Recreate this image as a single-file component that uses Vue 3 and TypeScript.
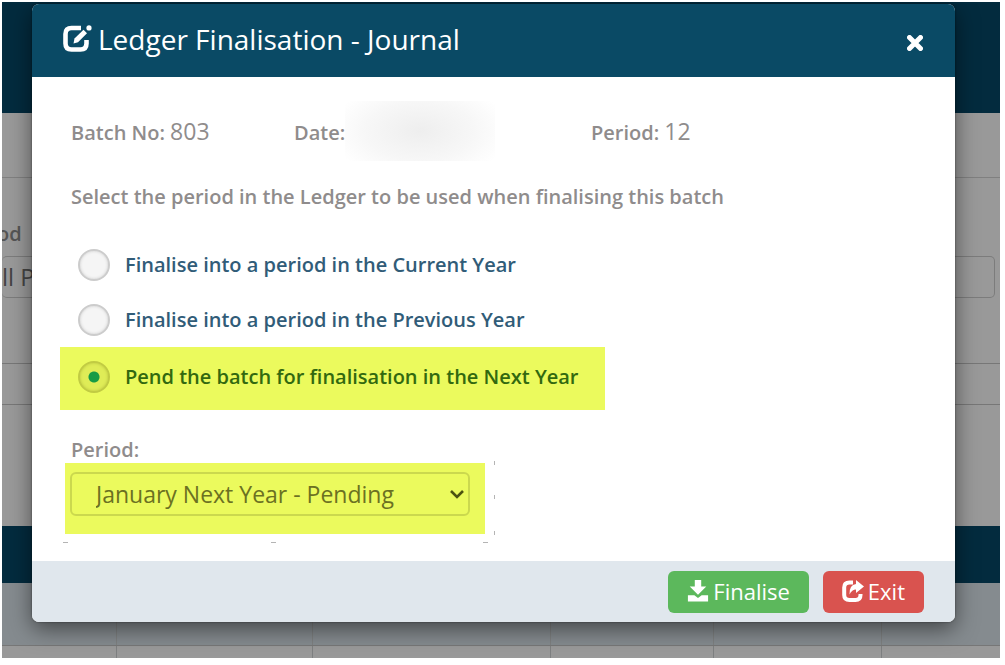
<script setup lang="ts">
import { ref } from 'vue'

interface Option {
  value: string
  label: string
}

const options: Option[] = [
  { value: 'current', label: 'Finalise into a period in the Current Year' },
  { value: 'previous', label: 'Finalise into a period in the Previous Year' },
  { value: 'next', label: 'Pend the batch for finalisation in the Next Year' },
]
const target = ref('next')
const period = ref('January Next Year - Pending')
</script>

<template>
  <div class="screen">
    <div class="page" aria-hidden="true">
      <div class="page-bar"></div>
      <div class="page-strip"></div>
      <div class="page-filters">
        <div class="page-label">od</div>
        <div class="page-field">ll P</div>
      </div>
      <div class="page-line"></div>
      <div class="page-blank"></div>
      <div class="page-title"></div>
      <div class="page-grid head"><i></i><i></i><i></i><i></i><i></i><i></i></div>
      <div class="page-grid"><i></i><i></i><i></i><i></i><i></i><i></i></div>
    </div>

    <div class="modal" role="dialog" aria-labelledby="title">
      <header class="header">
        <svg class="title-icon" viewBox="0 0 30 28" aria-hidden="true">
          <path d="M19 3H9.500Q3.500 3 3.500 9V18.500Q3.500 24.500 9.500 24.500H18.500Q24.500 24.500 24.500 18.500V15" fill="none" stroke="#fff" stroke-width="4.600" />
          <path d="M11.500 18.500L12.500 13.500L21.500 4.800L25 8.200L16 17.300Z" fill="#fff" />
          <circle cx="27" cy="2.900" r="2.600" fill="#fff" />
        </svg>
        <h1 id="title">Ledger Finalisation - Journal</h1>
        <button class="close" type="button" aria-label="Close">
          <svg viewBox="0 0 16 16"><path d="M2.500 2.500L13.500 13.500M13.500 2.500L2.500 13.500" stroke="#fff" stroke-width="5" stroke-linecap="round" /></svg>
        </button>
      </header>

      <div class="body">
        <div class="info">
          <div>Batch No: <span class="value">803</span></div>
          <div class="date">Date:<span class="redacted"></span></div>
          <div>Period: <span class="value">12</span></div>
        </div>
        <p class="hint">Select the period in the Ledger to be used when finalising this batch</p>

        <div class="options" role="radiogroup">
          <label v-for="o in options" :key="o.value" class="option" :class="{ chosen: o.value === target }">
            <input v-model="target" type="radio" name="target" :value="o.value" />
            <span>{{ o.label }}</span>
          </label>
        </div>

        <label class="period-label" for="period">Period:</label>
        <div class="period-box">
          <select id="period" v-model="period">
            <option>January Next Year - Pending</option>
          </select>
          <svg class="chevron" viewBox="0 0 14 10" aria-hidden="true">
            <path d="M1 2L7 8L13 2" fill="none" stroke="#4c5210" stroke-width="2.600" />
          </svg>
          <svg class="marks" viewBox="0 0 434 84" aria-hidden="true">
            <path d="M0 79.500H5M208 79.500H213M420 79.500H425M431.500 -2V2M431.500 32V36M431.500 68V72" stroke="#b4b4b4" stroke-width="1" fill="none" />
          </svg>
        </div>
      </div>

      <footer class="footer">
        <button class="btn go" type="button">
          <svg viewBox="0 0 22 24" aria-hidden="true">
            <path d="M7.500 0H14.500V7H20L11 16L2 7H7.500Z M0 16.500H7L11 19.500L15 16.500H22V23.500H0Z" fill="#fff" />
          </svg>
          Finalise
        </button>
        <button class="btn exit" type="button">
          <svg viewBox="0 0 22 22" aria-hidden="true">
            <path d="M11 2.500H7.500Q2.200 2.500 2.200 7.500V15Q2.200 20 7.500 20H13.500Q18.500 20 18.500 15V14" fill="none" stroke="#fff" stroke-width="4" />
            <path d="M14 0L22 6.500L14 13V9.500Q10 9.500 7.500 14.500Q7 5 14 4Z" fill="#fff" />
          </svg>
          Exit
        </button>
      </footer>
    </div>
  </div>
</template>

<style>
body {
  background: #fff;
}
</style>

<style scoped>
.screen {
  display: grid;
  margin: 2px 5px 7px 2px;
  overflow: hidden;
  font-family: "Open Sans", "Noto Sans", sans-serif;
  color: #8f8c8c;
}
.page,
.modal {
  grid-area: 1 / 1;
}
.page {
  background: #999;
}
.page-bar {
  height: 111px;
  background: #032b3e;
}
.page-strip {
  height: 64px;
  border-bottom: 1px solid #808080;
}
.page-filters {
  height: 186px;
  box-sizing: border-box;
  padding: 42px 5px 0 0;
  border-bottom: 1px solid #777;
}
.page-label {
  height: 36px;
  margin-left: -5px;
  font-size: 20px;
  font-weight: 600;
  line-height: 28px;
  color: #555;
}
.page-field {
  height: 40px;
  border: 1px solid #7c7c7c;
  border-left: 0;
  border-radius: 5px;
  font-size: 24px;
  line-height: 40px;
  color: #444;
}
.page-line {
  height: 40px;
  border-bottom: 1px solid #777;
}
.page-blank {
  height: 121px;
}
.page-title {
  height: 57px;
  background: #032b3e;
}
.page-grid {
  display: grid;
  grid-template-columns: 115fr 196fr 238fr 163fr 168fr 118fr;
  height: 12px;
}
.page-grid.head {
  height: 62px;
  background: #858b8f;
  border-bottom: 1px solid #777;
}
.page-grid i {
  border-right: 1px solid #7e8081;
}
.page-grid i:last-child {
  border-right: 0;
}
.modal {
  align-self: start;
  margin: 2px 45px 0 30px;
  border-radius: 7px;
  background: #fff;
  box-shadow: 0 7px 22px rgba(0, 0, 0, 0.5), 0 0 2px rgba(0, 0, 0, 0.5);
  overflow: hidden;
}
.header {
  display: flex;
  align-items: center;
  box-sizing: border-box;
  height: 73px;
  padding: 0 30px 4px;
  background: #0a4a65;
  color: #fff;
}
.title-icon {
  width: 30px;
  height: 28px;
}
h1 {
  flex: 1;
  margin: 0 0 0 6px;
  font-size: 28px;
  font-weight: 400;
  line-height: 40px;
}
.close {
  display: flex;
  padding: 8px 2px 0;
  border: 0;
  background: none;
}
.close svg {
  width: 16px;
  height: 16px;
}
.body {
  padding: 41px 39px 27px;
}
.info {
  display: grid;
  grid-template-columns: 223fr 297fr 325fr;
  font-size: 20px;
  font-weight: 600;
  line-height: 30px;
}
.value {
  font-size: 23px;
  font-weight: 400;
  line-height: 1;
}
.date {
  display: flex;
}
.redacted {
  width: 150px;
  height: 60px;
  margin: -17px 0 -13px;
  background: radial-gradient(ellipse 90px 50px at 50% 50%, #eee, #f7f7f7 60%, #fff);
}
.hint {
  margin: 34px 0 25px;
  font-size: 20px;
  font-weight: 600;
  line-height: 30px;
}
.options {
  display: flex;
  flex-direction: column;
  align-items: flex-start;
  margin-left: -11px;
}
.option {
  display: flex;
  align-items: center;
  height: 55px;
  padding: 0 26px 0 18px;
  font-size: 20px;
  font-weight: 600;
  color: #315c78;
}
.option.chosen {
  height: 59px;
  padding-bottom: 4px;
  background: #ebfa5d;
  color: #32690f;
}
.option input {
  appearance: none;
  width: 32px;
  height: 32px;
  margin: 0 15px 0 0;
  border: 2px solid #ccc;
  border-radius: 50%;
  background: #f5f5f5;
  box-shadow: inset 0 0 3px #ccc;
}
.option input:checked {
  border-color: #c1cb43;
  background: radial-gradient(circle, #169b45 5px, #dfec57 6px);
  box-shadow: inset 0 0 3px #b9c440;
}
.option span {
  padding-bottom: 1px;
}
.period-label {
  display: block;
  margin-top: 27px;
  font-size: 20px;
  font-weight: 600;
  line-height: 26px;
}
.period-box {
  position: relative;
  box-sizing: border-box;
  width: 420px;
  height: 71px;
  margin-left: -6px;
  padding: 9px 15px 18px 5px;
  background: #ebfa5d;
}
select {
  appearance: none;
  box-sizing: border-box;
  width: 100%;
  height: 44px;
  padding: 0 24px;
  border: 2px solid #cbd84e;
  border-radius: 6px;
  background: transparent;
  font: 400 23px "Open Sans", "Noto Sans", sans-serif;
  color: #6b7122;
}
.chevron {
  position: absolute;
  top: 26px;
  right: 21px;
  width: 14px;
  height: 10px;
}
.marks {
  position: absolute;
  top: 0;
  left: -2px;
  width: 434px;
  height: 84px;
  overflow: visible;
}
.footer {
  display: flex;
  justify-content: flex-end;
  align-items: center;
  gap: 14px;
  height: 61px;
  padding: 0 31px;
  background: #e0e7ed;
}
.btn {
  display: flex;
  align-items: center;
  gap: 4px;
  height: 42px;
  padding: 0 19px 2px;
  border: 0;
  border-radius: 6px;
  font: 400 22px "Open Sans", "Noto Sans", sans-serif;
  color: #fff;
}
.btn svg {
  width: 22px;
  height: 22px;
}
.go {
  background: #5cb85c;
}
.exit {
  background: #d9534f;
}
</style>
